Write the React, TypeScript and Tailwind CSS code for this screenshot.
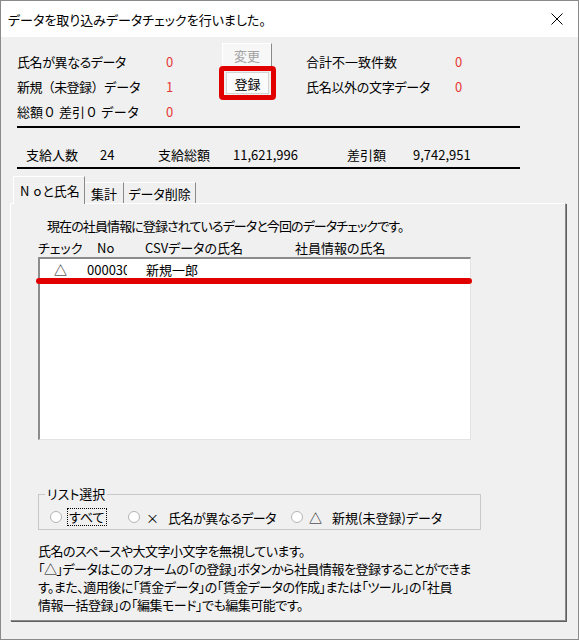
export default function App() {
  const red = 'text-[#e53935]';

  return (
    <div className="w-[579px] h-[640px] overflow-hidden border border-[#8a8a8a] bg-[#f0f0f0] text-[13px] leading-none text-black font-['Noto_Sans_CJK_JP',sans-serif] [font-feature-settings:'palt']">
      {/* title bar */}
      <div className="h-[36px] bg-white flex items-center justify-between pl-[7px] pr-[15px]">
        <span>データを取り込みデータチェックを行いました。</span>
        <svg width="12" height="12" viewBox="0 0 12 12" className="text-black">
          <path d="M0.5 0.5 L11.5 11.5 M11.5 0.5 L0.5 11.5" stroke="currentColor" strokeWidth="1" />
        </svg>
      </div>

      {/* check counts */}
      <div className="flex items-start pl-[16px] pt-[6px]">
        <div className="mt-[6px] w-[202px]">
          <div className="h-[25px] flex items-center">
            <span className="w-[149px] tracking-[-0.4px]">氏名が異なるデータ</span>
            <span className={red}>0</span>
          </div>
          <div className="h-[25px] flex items-center">
            <span className="w-[149px] tracking-[-0.6px] [font-feature-settings:normal]">新規（未登録）データ</span>
            <span className={red}>1</span>
          </div>
          <div className="h-[25px] flex items-center">
            <span className="w-[149px] [font-feature-settings:normal]">総額０ 差引０ データ</span>
            <span className={red}>0</span>
          </div>
        </div>

        <div className="w-[57px] flex flex-col">
          <div className="ml-[3px] w-[50px] h-[23px] flex items-center justify-center bg-[#f7f7f7] border-t border-l border-white border-r border-r-[#8a8a8a] text-[#a3a3a3]">
            変更
          </div>
          <div className="w-[57px] h-[34px] border-[5px] border-[#e00000] rounded-[4px] flex items-center justify-center">
            <div className="w-[43px] h-[22px] bg-[#fbfbfb] border border-[#d4d4d4] flex items-center justify-center">
              登録
            </div>
          </div>
        </div>

        <div className="ml-[30px] mt-[6px]">
          <div className="h-[25px] flex items-center">
            <span className="w-[149px]">合計不一致件数</span>
            <span className={red}>0</span>
          </div>
          <div className="h-[25px] flex items-center">
            <span className="w-[149px] tracking-[-0.3px]">氏名以外の文字データ</span>
            <span className={red}>0</span>
          </div>
        </div>
      </div>

      <div className="ml-[16px] mt-[2px] w-[503px] h-[2px] bg-black" />

      {/* totals */}
      <div className="ml-[16px] mt-[13px] h-[26px] flex items-center pl-[9px]">
        <span className="w-[74px]">支給人数</span>
        <span className="w-[58px]">24</span>
        <span className="w-[75px]">支給総額</span>
        <span className="w-[114px]">11,621,996</span>
        <span className="w-[66px]">差引額</span>
        <span>9,742,951</span>
      </div>

      <div className="ml-[16px] w-[503px] h-[2px] bg-black" />

      {/* tabs */}
      <div className="ml-[9px] mr-[12px]">
        <div className="h-[34px] flex items-end">
          <div className="ml-[3px] w-[72px] h-[28px] -mb-px relative z-10 bg-[#f0f0f0] border-t border-l border-white border-r border-r-[#8a8a8a] flex items-center pl-[6px]">
            <span className="mr-[4px]">N</span>o<span className="ml-[1px]">と氏名</span>
          </div>
          <div className="w-[39px] h-[21px] border-t border-white border-r border-r-[#8a8a8a] flex items-center justify-center">
            集計
          </div>
          <div className="w-[72px] h-[21px] border-t border-white border-r border-r-[#8a8a8a] flex items-center justify-center">
            データ削除
          </div>
        </div>

        <div className="border-t border-l border-white border-r border-b border-r-[#8a8a8a] border-b-[#8a8a8a] shadow-[1px_1px_0_#5f5f5f] pl-[27px] pt-[11px] pb-[6px]">
          <div className="h-[20px] flex items-center ml-[9px] tracking-[-0.9px]">
            現在の社員情報に登録されているデータと今回のデータチェックです。
          </div>

          <div className="mt-[3px] h-[19px] flex items-center">
            <span className="w-[59px]">チェック</span>
            <span className="w-[48px]">No</span>
            <span className="w-[150px]">CSVデータの氏名</span>
            <span>社員情報の氏名</span>
          </div>

          <div className="relative w-[433px] h-[183px] bg-white border-t-2 border-l-2 border-[#8c8c8c] border-r border-b border-r-[#e3e3e3] border-b-[#e3e3e3]">
            <div className="h-[20px] flex items-center">
              <span className="w-[47px] pl-[14px]">△</span>
              <span className="w-[40px] overflow-hidden whitespace-nowrap">000030</span>
              <span className="ml-[19px]">新規一郎</span>
            </div>
            <div className="absolute left-[-4px] top-[19px] w-[436px] h-[6px] rounded-full bg-[#e00000]" />
          </div>

          <fieldset className="mt-[45px] w-[443px] border border-[#c8c8c8] pl-[11px] pb-[3px]">
            <legend className="ml-[-5px] px-[2px] h-[18px] leading-[18px]">リスト選択</legend>
            <div className="mt-[5px] h-[18px] flex items-center">
              <div className="w-[78px] flex items-center">
                <span className="w-[12px] h-[12px] rounded-full border border-[#b4b4b4] bg-white" />
                <span className="ml-[5px] px-[1px] leading-[16px] border border-dotted border-black">すべて</span>
              </div>
              <div className="w-[163px] flex items-center">
                <span className="w-[12px] h-[12px] rounded-full border border-[#b4b4b4] bg-white" />
                <span className="ml-[6px]">×</span>
                <span className="ml-[9px] tracking-[-0.5px]">氏名が異なるデータ</span>
              </div>
              <div className="flex items-center">
                <span className="w-[12px] h-[12px] rounded-full border border-[#b4b4b4] bg-white" />
                <span className="ml-[6px]">△</span>
                <span className="ml-[10px]">新規(未登録)データ</span>
              </div>
            </div>
          </fieldset>

          <div className="mt-[12px] leading-[18px] whitespace-nowrap tracking-[-0.5px]">
            <div>氏名のスペースや大文字小文字を無視しています。</div>
            <div>「△」データはこのフォームの「の登録」ボタンから社員情報を登録することができま</div>
            <div>す。また、適用後に「賃金データ」の「賃金データの作成」または「ツール」の「社員</div>
            <div>情報一括登録」の「編集モード」でも編集可能です。</div>
          </div>
        </div>
      </div>
    </div>
  );
}
